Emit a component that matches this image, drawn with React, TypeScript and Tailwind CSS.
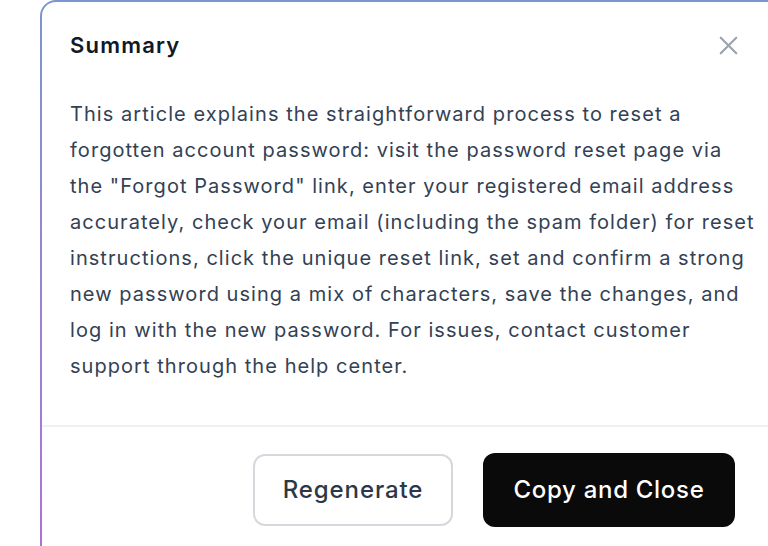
import React from 'react';
import { X } from 'lucide-react';

export default function App() {
  return (
    <div className="w-[768px] h-[546px] overflow-hidden bg-white" style={{ fontFamily: 'Inter, "Noto Sans", sans-serif' }}>
      <div className="ml-[40px] w-[740px] h-[600px] rounded-tl-[16px] bg-gradient-to-b from-[#7a95cf] to-[#b06ed8] pl-[2px] pt-[2px]">
        <div className="h-full rounded-tl-[14px] bg-white pt-[29px]">
          {/* Header */}
          <div className="flex h-[28px] items-center justify-between pl-[28px] pr-[36px]">
            <h2 className="text-[22px] leading-[28px] font-semibold text-[#111827] tracking-[1.2px]">Summary</h2>
            <button className="text-[#9ca3af]">
              <X size={31} strokeWidth={1.7} />
            </button>
          </div>

          {/* Body */}
          <p className="pl-[28px] pt-[37px] text-[20px] leading-[36px] text-[#334155] tracking-[1.05px]">
            This article explains the straightforward process to reset a<br />
            forgotten account password: visit the password reset page via<br />
            the "Forgot Password" link, enter your registered email address<br />
            accurately, check your email (including the spam folder) for reset<br />
            instructions, click the unique reset link, set and confirm a strong<br />
            new password using a mix of characters, save the changes, and<br />
            log in with the new password. For issues, contact customer<br />
            support through the help center.
          </p>

          {/* Footer */}
          <div className="mt-[41px] border-t-2 border-[#eef0f3]">
            <div className="flex items-center justify-end gap-[30px] pr-[45px] pt-[26px]">
              <button className="flex h-[72px] w-[200px] items-center justify-center rounded-[12px] border-2 border-[#d6d8de] bg-white text-[24px] font-medium text-[#2d3748] tracking-[0.9px]">
                Regenerate
              </button>
              <button className="flex h-[74px] w-[252px] items-center justify-center rounded-[12px] bg-[#0a0a0a] text-[24px] font-medium text-white tracking-[0.7px]">
                Copy and Close
              </button>
            </div>
          </div>
        </div>
      </div>
    </div>
  );
}
